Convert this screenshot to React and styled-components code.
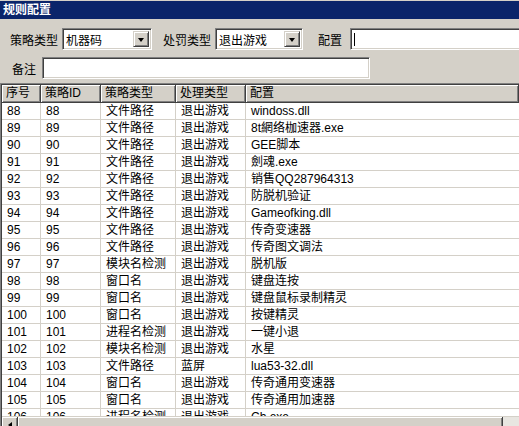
import React from 'react';
import styled, { createGlobalStyle } from 'styled-components';

const GlobalStyle = createGlobalStyle`
  html, body { margin: 0; padding: 0; background: #d4d0c8; }
  body {
    font-family: "Liberation Sans", "Noto Sans CJK SC", sans-serif;
    font-size: 12px;
    color: #000;
  }
`

const Window = styled.div`
  width: 519px;
  height: 426px;
  overflow: hidden;
  display: flex;
  flex-direction: column;
  background: #d4d0c8;
  border-top: 1px solid #d4d0c8;
  box-sizing: border-box;
`

const TitleBar = styled.div`
  height: 18px;
  background: #0a246a;
  color: #fff;
  font-weight: bold;
  font-size: 12px;
  line-height: 18px;
  padding-left: 3px;
  flex-shrink: 0;
`

const Form = styled.div`
  display: flex;
  flex-direction: column;
  gap: 7px;
  padding: 9px 0 4px 0;
  flex-shrink: 0;
`

const FormRow = styled.div`
  display: flex;
  align-items: center;
  height: 22px;
`

const Label = styled.span`
  margin-left: ${props => props.$ml || 0}px;
  margin-right: ${props => props.$mr || 4}px;
  white-space: nowrap;
`

const Sunken = styled.div`
  box-sizing: border-box;
  height: 22px;
  width: ${props => props.$w}px;
  flex-shrink: 0;
  background: #fff;
  border-top: 1px solid #808080;
  border-left: 1px solid #808080;
  border-right: 1px solid #fff;
  border-bottom: 1px solid #fff;
  box-shadow: inset 1px 1px 0 #404040, inset -1px -1px 0 #d4d0c8;
  display: flex;
  align-items: center;
`

const ComboText = styled.span`
  flex: 1;
  padding-left: 3px;
`

const DropButton = styled.div`
  width: 16px;
  height: 16px;
  margin-right: 2px;
  box-sizing: border-box;
  background: #d4d0c8;
  border-top: 1px solid #d4d0c8;
  border-left: 1px solid #d4d0c8;
  border-right: 1px solid #404040;
  border-bottom: 1px solid #404040;
  box-shadow: inset 1px 1px 0 #fff, inset -1px -1px 0 #808080;
  display: flex;
  align-items: center;
  justify-content: center;
  &::after {
    content: "";
    border-left: 3.5px solid transparent;
    border-right: 3.5px solid transparent;
    border-top: 4px solid #000;
    margin-top: 1px;
  }
`

const Caret = styled.span`
  width: 1px;
  height: 13px;
  background: #000;
  margin-left: 3px;
`

const Combo = ({ width, value }) => (
  <Sunken $w={width}>
    <ComboText>{value}</ComboText>
    <DropButton />
  </Sunken>
)

const TableFrame = styled.div`
  flex-shrink: 0;
  display: flex;
  flex-direction: column;
  border-top: 1px solid #808080;
  border-left: 1px solid #808080;
  box-shadow: inset 1px 1px 0 #404040;
  padding: 1px 0 0 1px;
  background: #fff;
`

const Grid = styled.div`
  height: 331px;
  overflow: hidden;
  display: flex;
  flex-direction: column;
`

const cols = '39px 60px 75px 70px 1fr';

const HeaderRow = styled.div`
  display: grid;
  grid-template-columns: ${cols};
  height: 18px;
  flex-shrink: 0;
`

const HeaderCell = styled.div`
  box-sizing: border-box;
  background: #d4d0c8;
  border-right: 1px solid #404040;
  border-bottom: 1px solid #404040;
  box-shadow: inset 1px 1px 0 #fff, inset -1px -1px 0 #808080;
  padding-left: 4px;
  line-height: 17px;
  white-space: nowrap;
  overflow: hidden;
`

const Row = styled.div`
  display: grid;
  grid-template-columns: ${cols};
  height: 17px;
  flex-shrink: 0;
  border-bottom: 1px solid #d4d0c8;
  box-sizing: border-box;
`

const Cell = styled.div`
  border-right: 1px solid #d4d0c8;
  padding-left: 5px;
  padding-top: 1px;
  line-height: 15px;
  white-space: nowrap;
  overflow: hidden;
  &:last-child { border-right: none; }
`

const ScrollBar = styled.div`
  height: 17px;
  flex-shrink: 0;
  background: #e8e6e1;
  display: flex;
  border-top: 1px solid #d4d0c8;
`

const ArrowButton = styled.div`
  width: 16px;
  height: 16px;
  box-sizing: border-box;
  background: #d4d0c8;
  border-right: 1px solid #404040;
  border-bottom: 1px solid #404040;
  box-shadow: inset 1px 1px 0 #fff, inset -1px -1px 0 #808080;
  display: flex;
  align-items: center;
  justify-content: center;
  &::after {
    content: "";
    border-top: 3.5px solid transparent;
    border-bottom: 3.5px solid transparent;
    border-right: 4px solid #000;
  }
`

const Thumb = styled(ArrowButton)`
  width: 485px;
  &::after { display: none; }
`

const rows = [
  ['88', '88', '文件路径', '退出游戏', 'windoss.dll'],
  ['89', '89', '文件路径', '退出游戏', '8t網络枷速器.exe'],
  ['90', '90', '文件路径', '退出游戏', 'GEE脚本'],
  ['91', '91', '文件路径', '退出游戏', '劍魂.exe'],
  ['92', '92', '文件路径', '退出游戏', '销售QQ287964313'],
  ['93', '93', '文件路径', '退出游戏', '防脱机验证'],
  ['94', '94', '文件路径', '退出游戏', 'Gameofking.dll'],
  ['95', '95', '文件路径', '退出游戏', '传奇变速器'],
  ['96', '96', '文件路径', '退出游戏', '传奇图文调法'],
  ['97', '97', '模块名检测', '退出游戏', '脱机版'],
  ['98', '98', '窗口名', '退出游戏', '键盘连按'],
  ['99', '99', '窗口名', '退出游戏', '键盘鼠标录制精灵'],
  ['100', '100', '窗口名', '退出游戏', '按键精灵'],
  ['101', '101', '进程名检测', '退出游戏', '一键小退'],
  ['102', '102', '模块名检测', '退出游戏', '水星'],
  ['103', '103', '文件路径', '蓝屏', 'lua53-32.dll'],
  ['104', '104', '窗口名', '退出游戏', '传奇通用变速器'],
  ['105', '105', '窗口名', '退出游戏', '传奇通用加速器'],
  ['106', '106', '进程名检测', '退出游戏', 'Ch.exe'],
];

const headers = ['序号', '策略ID', '策略类型', '处理类型', '配置'];

export default function App() {
  return (
    <>
      <GlobalStyle />
      <Window>
        <TitleBar>规则配置</TitleBar>
        <Form>
          <FormRow>
            <Label $ml={10} $mr={4}>策略类型</Label>
            <Combo width={90} value="机器码" />
            <Label $ml={11} $mr={4}>处罚类型</Label>
            <Combo width={88} value="退出游戏" />
            <Label $ml={15} $mr={8}>配置</Label>
            <Sunken $w={180}><Caret /></Sunken>
          </FormRow>
          <FormRow>
            <Label $ml={12} $mr={6}>备注</Label>
            <Sunken $w={328} />
          </FormRow>
        </Form>
        <TableFrame>
          <Grid>
            <HeaderRow>
              {headers.map(h => <HeaderCell key={h}>{h}</HeaderCell>)}
            </HeaderRow>
            {rows.map(r => (
              <Row key={r[0]}>
                {r.map((c, i) => <Cell key={i}>{c}</Cell>)}
              </Row>
            ))}
          </Grid>
          <ScrollBar>
            <ArrowButton />
            <Thumb />
          </ScrollBar>
        </TableFrame>
      </Window>
    </>
  );
}
